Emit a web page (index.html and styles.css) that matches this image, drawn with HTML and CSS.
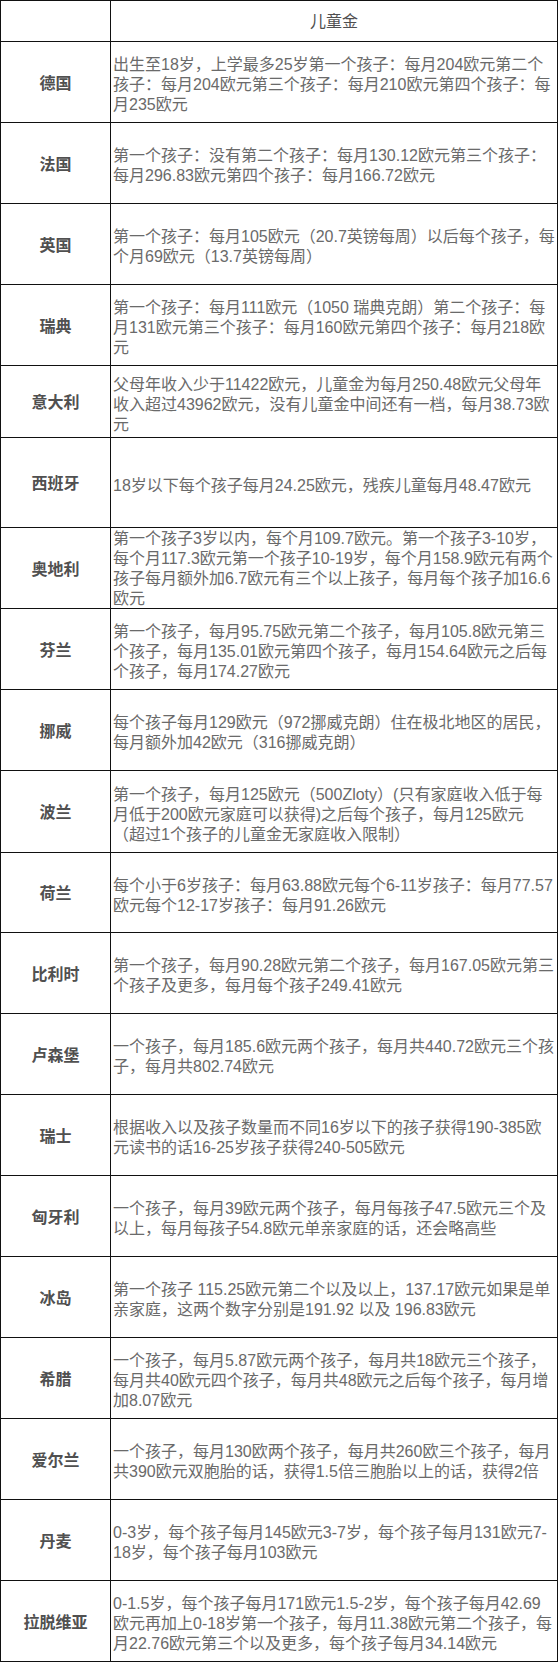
FILE: index.html
```html
<!DOCTYPE html>
<html lang="zh-CN">
<head>
<meta charset="utf-8">
<title>儿童金</title>
<link rel="stylesheet" href="styles.css">
</head>
<body>
<div class="table">
  <div class="row row-head">
    <div class="name"></div>
    <div class="head-title">儿童金</div>
  </div>
  <div class="row">
    <div class="name">德国</div>
    <div class="text">出生至18岁，上学最多25岁第一个孩子：每月204欧元第二个<br>孩子：每月204欧元第三个孩子：每月210欧元第四个孩子：每<br>月235欧元</div>
  </div>
  <div class="row">
    <div class="name">法国</div>
    <div class="text">第一个孩子：没有第二个孩子：每月130.12欧元第三个孩子：<br>每月296.83欧元第四个孩子：每月166.72欧元</div>
  </div>
  <div class="row">
    <div class="name">英国</div>
    <div class="text">第一个孩子：每月105欧元（20.7英镑每周）以后每个孩子，每<br>个月69欧元（13.7英镑每周）</div>
  </div>
  <div class="row">
    <div class="name">瑞典</div>
    <div class="text">第一个孩子：每月111欧元（1050 瑞典克朗）第二个孩子：每<br>月131欧元第三个孩子：每月160欧元第四个孩子：每月218欧<br>元</div>
  </div>
  <div class="row row-72">
    <div class="name">意大利</div>
    <div class="text">父母年收入少于11422欧元，儿童金为每月250.48欧元父母年<br>收入超过43962欧元，没有儿童金中间还有一档，每月38.73欧<br>元</div>
  </div>
  <div class="row row-90">
    <div class="name">西班牙</div>
    <div class="text">18岁以下每个孩子每月24.25欧元，残疾儿童每月48.47欧元</div>
  </div>
  <div class="row">
    <div class="name">奥地利</div>
    <div class="text text-full">第一个孩子3岁以内，每个月109.7欧元。第一个孩子3-10岁，<br>每个月117.3欧元第一个孩子10-19岁，每个月158.9欧元有两个<br>孩子每月额外加6.7欧元有三个以上孩子，每月每个孩子加16.6<br>欧元</div>
  </div>
  <div class="row">
    <div class="name">芬兰</div>
    <div class="text">第一个孩子，每月95.75欧元第二个孩子，每月105.8欧元第三<br>个孩子，每月135.01欧元第四个孩子，每月154.64欧元之后每<br>个孩子，每月174.27欧元</div>
  </div>
  <div class="row">
    <div class="name">挪威</div>
    <div class="text">每个孩子每月129欧元（972挪威克朗）住在极北地区的居民，<br>每月额外加42欧元（316挪威克朗）</div>
  </div>
  <div class="row row-82">
    <div class="name">波兰</div>
    <div class="text">第一个孩子，每月125欧元（500Zloty）(只有家庭收入低于每<br>月低于200欧元家庭可以获得)之后每个孩子，每月125欧元<br>（超过1个孩子的儿童金无家庭收入限制）</div>
  </div>
  <div class="row row-80">
    <div class="name">荷兰</div>
    <div class="text">每个小于6岁孩子：每月63.88欧元每个6-11岁孩子：每月77.57<br>欧元每个12-17岁孩子：每月91.26欧元</div>
  </div>
  <div class="row">
    <div class="name">比利时</div>
    <div class="text">第一个孩子，每月90.28欧元第二个孩子，每月167.05欧元第三<br>个孩子及更多，每月每个孩子249.41欧元</div>
  </div>
  <div class="row">
    <div class="name">卢森堡</div>
    <div class="text">一个孩子，每月185.6欧元两个孩子，每月共440.72欧元三个孩<br>子，每月共802.74欧元</div>
  </div>
  <div class="row">
    <div class="name">瑞士</div>
    <div class="text">根据收入以及孩子数量而不同16岁以下的孩子获得190-385欧<br>元读书的话16-25岁孩子获得240-505欧元</div>
  </div>
  <div class="row">
    <div class="name">匈牙利</div>
    <div class="text">一个孩子，每月39欧元两个孩子，每月每孩子47.5欧元三个及<br>以上，每月每孩子54.8欧元单亲家庭的话，还会略高些</div>
  </div>
  <div class="row">
    <div class="name">冰岛</div>
    <div class="text">第一个孩子 115.25欧元第二个以及以上，137.17欧元如果是单<br>亲家庭，这两个数字分别是191.92 以及 196.83欧元</div>
  </div>
  <div class="row">
    <div class="name">希腊</div>
    <div class="text">一个孩子，每月5.87欧元两个孩子，每月共18欧元三个孩子，<br>每月共40欧元四个孩子，每月共48欧元之后每个孩子，每月增<br>加8.07欧元</div>
  </div>
  <div class="row">
    <div class="name">爱尔兰</div>
    <div class="text">一个孩子，每月130欧两个孩子，每月共260欧三个孩子，每月<br>共390欧元双胞胎的话，获得1.5倍三胞胎以上的话，获得2倍</div>
  </div>
  <div class="row">
    <div class="name">丹麦</div>
    <div class="text">0-3岁，每个孩子每月145欧元3-7岁，每个孩子每月131欧元7-<br>18岁，每个孩子每月103欧元</div>
  </div>
  <div class="row">
    <div class="name">拉脱维亚</div>
    <div class="text">0-1.5岁，每个孩子每月171欧元1.5-2岁，每个孩子每月42.69<br>欧元再加上0-18岁第一个孩子，每月11.38欧元第二个孩子，每<br>月22.76欧元第三个以及更多，每个孩子每月34.14欧元</div>
  </div>
</div>
</body>
</html>
```

FILE: styles.css
```css
html, body {
  margin: 0;
  padding: 0;
  background: #ffffff;
}

body {
  font-family: "Liberation Sans", "Noto Sans CJK SC", sans-serif;
  font-size: 16px;
  line-height: 20px;
  color: #6a6a6a;
}

.table {
  width: 558px;
  border: 1px solid #111;
  border-bottom: none;
  box-sizing: border-box;
}

.row {
  display: grid;
  grid-template-columns: 110px 1fr;
  height: 81px;
  box-sizing: border-box;
  border-bottom: 1px solid #111;
}

.row-head { height: 41px; }
.row-72 { height: 72px; }
.row-90 { height: 90px; }
.row-82 { height: 82px; }
.row-80 { height: 80px; }

.name {
  display: flex;
  align-items: center;
  justify-content: center;
  box-sizing: border-box;
  border-right: 1px solid #111;
  padding-top: 3px;
  font-weight: bold;
  color: #505050;
}

.head-title {
  display: flex;
  align-items: center;
  justify-content: center;
  padding-top: 2px;
  color: #505050;
}

.text {
  display: flex;
  align-items: center;
  box-sizing: border-box;
  padding: 6px 0 0 2px;
  white-space: nowrap;
  overflow: hidden;
}

.text-full {
  padding-top: 1px;
}
```
